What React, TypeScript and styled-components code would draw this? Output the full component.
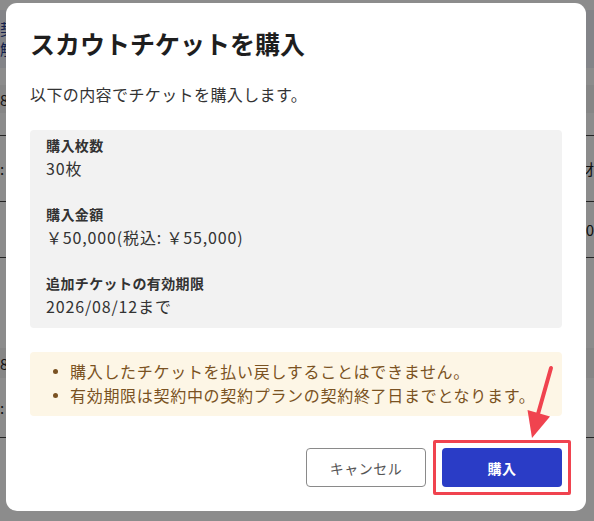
import React from "react";
import styled, { createGlobalStyle } from "styled-components";

const Global = createGlobalStyle`
  html, body { margin: 0; padding: 0; background: #ffffff; }
  body { font-family: "Noto Sans CJK JP", "Noto Sans", sans-serif; overflow: hidden; }
  * { box-sizing: border-box; }
`;

const Page = styled.div`
  width: 594px;
  height: 521px;
  display: flex;
  flex-direction: column;
  padding-top: 10px;
  background: #ffffff;
  overflow: hidden;
`;

const PageHeader = styled.div`
  height: 58px;
  background: #eef1f7;
  display: flex;
  flex-direction: column;
  justify-content: center;
  color: #233a8c;
  font-size: 15px;
  line-height: 20px;
`;

const PageRow = styled.div<{ $h: number; $bg?: string; $line?: boolean }>`
  height: ${(p) => p.$h}px;
  background: ${(p) => p.$bg ?? "#ffffff"};
  border-bottom: ${(p) => (p.$line ? "1px solid #444" : "none")};
  display: flex;
  align-items: center;
  justify-content: space-between;
  font-size: 15px;
  color: #222;
`;

const BigGlyph = styled.span`
  font-weight: 700;
  font-size: 22px;
`;

const Overlay = styled.div`
  position: fixed;
  inset: 0;
  background: rgba(0, 0, 0, 0.45);
  display: flex;
  align-items: flex-start;
  padding: 3px 8px 0 6px;
`;

const Dialog = styled.div`
  position: relative;
  width: 580px;
  background: #ffffff;
  border-radius: 11px;
  padding: 24px 24px 24px;
  display: flex;
  flex-direction: column;
  gap: 24px;
`;

const Title = styled.h2`
  margin: 0 0 -1px;
  font-size: 25px;
  line-height: 32px;
  font-weight: 700;
  color: #1e1e1e;
`;

const Lead = styled.p`
  margin: 0;
  font-size: 16px;
  line-height: 24px;
  letter-spacing: 0.4px;
  color: #333;
`;

const Summary = styled.dl`
  margin: 0;
  background: #f2f2f2;
  border-radius: 4px;
  padding: 5px 16px 10px;
  display: flex;
  flex-direction: column;
  gap: 24px;
`;

const Item = styled.div`
  display: flex;
  flex-direction: column;
`;

const Label = styled.dt`
  font-size: 14px;
  line-height: 21px;
  font-weight: 700;
  letter-spacing: 0.4px;
  color: #333;
`;

const Value = styled.dd`
  margin: 0;
  font-size: 16px;
  line-height: 24px;
  letter-spacing: 0.85px;
  color: #333;
`;

const Notice = styled.ul`
  margin: 0;
  list-style: none;
  background: #fdf6e6;
  border-radius: 4px;
  padding: 7px 16px 9px 40px;
`;

const NoticeItem = styled.li`
  position: relative;
  font-size: 16px;
  line-height: 24px;
  letter-spacing: 0.7px;
  color: #7a5222;
  &::before {
    content: "";
    position: absolute;
    left: -17px;
    top: 10px;
    width: 5px;
    height: 5px;
    border-radius: 50%;
    background: #7a5222;
  }
`;

const Actions = styled.div`
  display: flex;
  justify-content: flex-end;
  gap: 16px;
  margin-top: 8px;
`;

const Button = styled.button<{ $primary?: boolean }>`
  position: relative;
  width: 120px;
  height: 39px;
  border-radius: 4px;
  font-family: inherit;
  font-size: 14px;
  font-weight: ${(p) => (p.$primary ? 700 : 400)};
  letter-spacing: 0.5px;
  cursor: pointer;
  border: ${(p) => (p.$primary ? "none" : "1px solid #8a8a8a")};
  background: ${(p) => (p.$primary ? "#2a3cc6" : "#ffffff")};
  color: ${(p) => (p.$primary ? "#ffffff" : "#555555")};
`;

const Highlight = styled.span`
  position: absolute;
  left: -9px;
  right: -9px;
  top: -8px;
  bottom: -8px;
  border: 3px solid #f0434f;
  border-radius: 2px;
  pointer-events: none;
`;

const ArrowLayer = styled.svg`
  position: absolute;
  left: 0;
  top: 0;
  width: 594px;
  height: 521px;
  pointer-events: none;
  overflow: visible;
`;

export default function App() {
  return (
    <>
      <Global />
      <Page>
        <PageHeader>
          <span>契約</span>
          <span>解約</span>
        </PageHeader>
        <PageRow $h={17} />
        <PageRow $h={28} $bg="#f4f4f4">
          <span>8</span>
          <span />
        </PageRow>
        <PageRow $h={23} $line />
        <PageRow $h={66} $line>
          <span>:</span>
          <span>材</span>
        </PageRow>
        <PageRow $h={56} $line>
          <span />
          <span>30</span>
        </PageRow>
        <PageRow $h={90}>
          <BigGlyph>ト</BigGlyph>
        </PageRow>
        <PageRow $h={30} $bg="#f4f4f4">
          <span>8</span>
        </PageRow>
        <PageRow $h={60} $line>
          <span>:</span>
        </PageRow>
        <PageRow $h={60} />
      </Page>
      <Overlay>
        <Dialog>
          <Title>スカウトチケットを購入</Title>
          <Lead>以下の内容でチケットを購入します。</Lead>
          <Summary>
            <Item>
              <Label>購入枚数</Label>
              <Value>30枚</Value>
            </Item>
            <Item>
              <Label>購入金額</Label>
              <Value>￥50,000(税込: ￥55,000)</Value>
            </Item>
            <Item>
              <Label>追加チケットの有効期限</Label>
              <Value>2026/08/12まで</Value>
            </Item>
          </Summary>
          <Notice>
            <NoticeItem>購入したチケットを払い戻しすることはできません。</NoticeItem>
            <NoticeItem>有効期限は契約中の契約プランの契約終了日までとなります。</NoticeItem>
          </Notice>
          <Actions>
            <Button>キャンセル</Button>
            <Button $primary>
              購入
              <Highlight />
            </Button>
          </Actions>
        </Dialog>
        <ArrowLayer viewBox="0 0 594 521">
          <line x1="551" y1="368" x2="538" y2="414" stroke="#f0434f" strokeWidth="4" strokeLinecap="round" />
          <polygon points="532,438 527.5,410 550,416.5" fill="#f0434f" />
        </ArrowLayer>
      </Overlay>
    </>
  );
}
